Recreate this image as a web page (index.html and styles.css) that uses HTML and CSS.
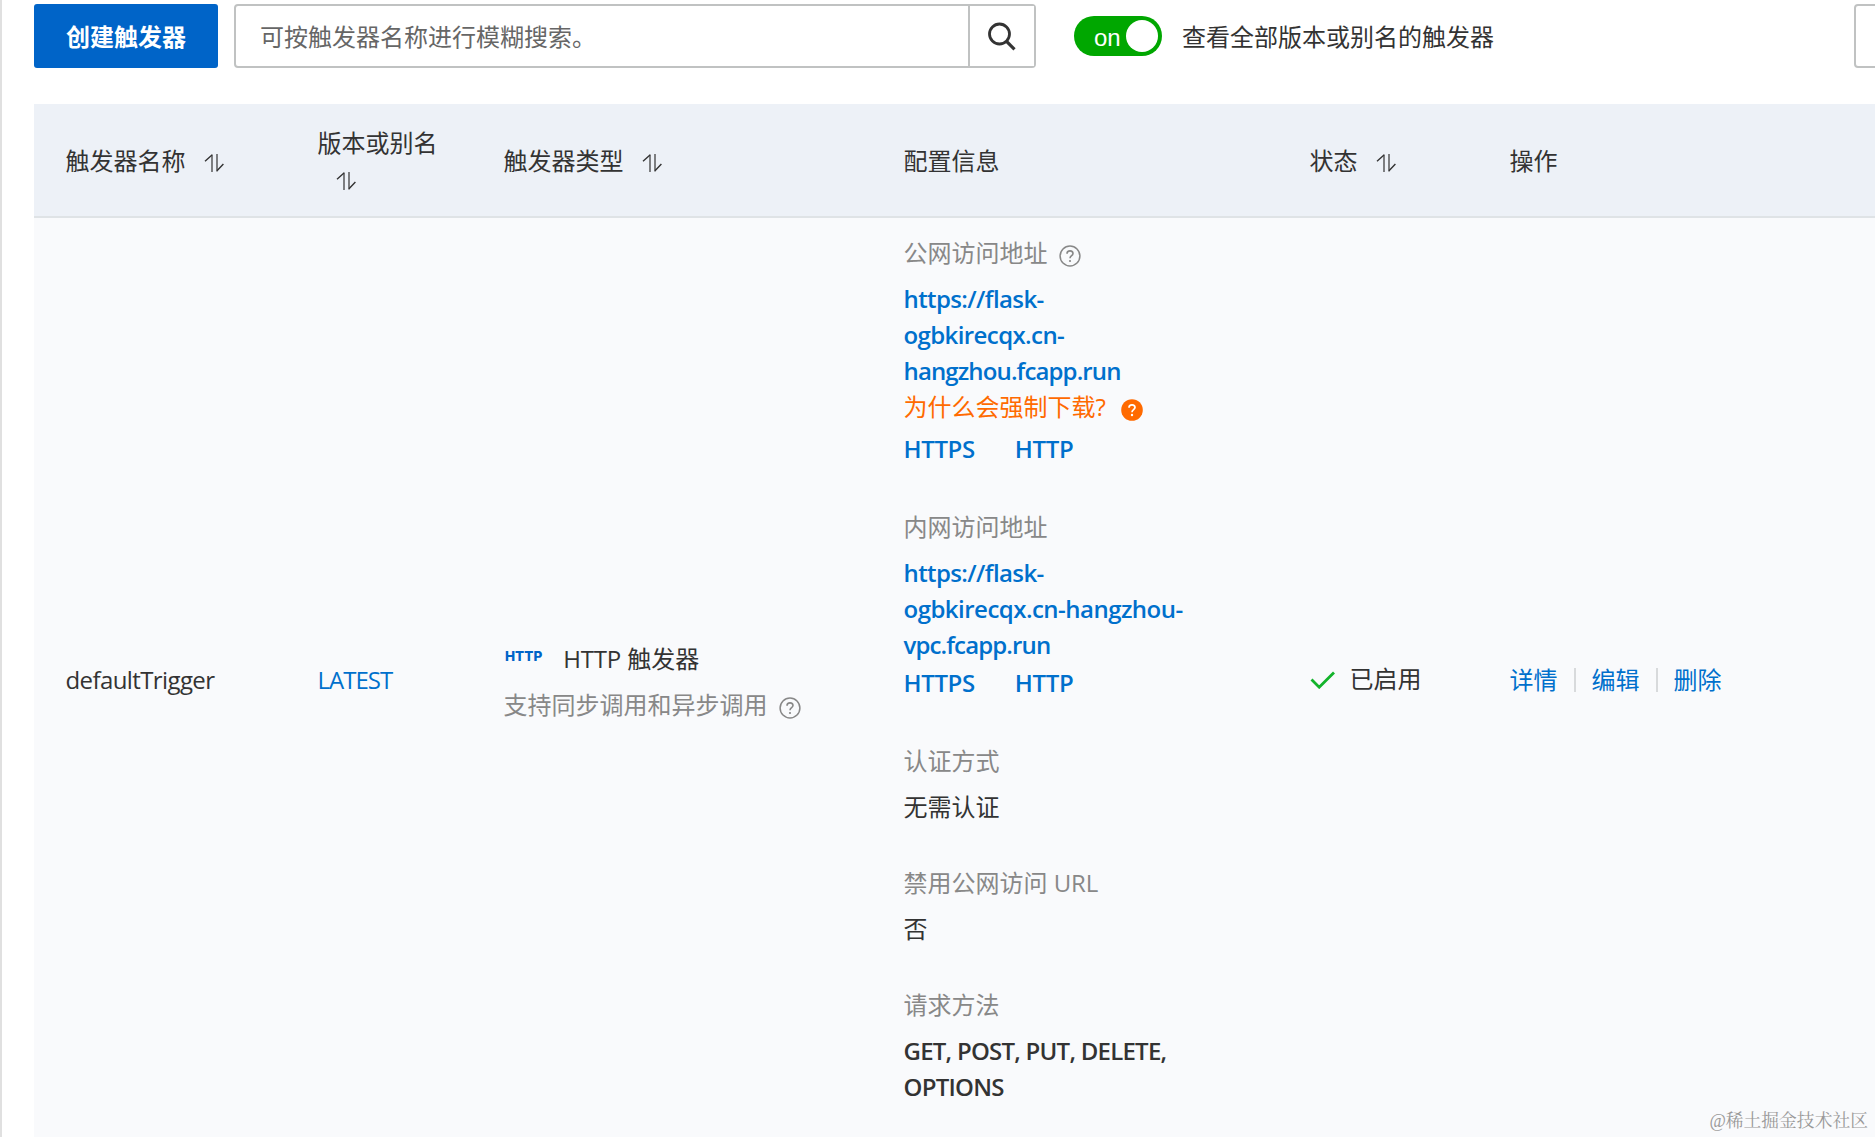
FILE: index.html
```html
<!DOCTYPE html>
<html lang="zh-CN">
<head>
<meta charset="utf-8">
<title>触发器管理</title>
<link rel="stylesheet" href="styles.css">
</head>
<body>
<svg class="defs" aria-hidden="true">
  <symbol id="sort" viewBox="0 0 20 20"><path d="M8 1.5V19M13 1V18.5" fill="none" stroke="currentColor" stroke-width="1.2"/><path d="M1 8.2 8 2M13 17.8 19.4 11" fill="none" stroke="currentColor" stroke-width="1.4"/></symbol>
  <symbol id="help" viewBox="0 0 22 22"><circle cx="11" cy="11" r="9.9" fill="none" stroke="currentColor" stroke-width="1.5"/><path d="M8 8.8C8 6.9 9.3 5.9 11 5.9S14 7 14 8.6C14 10.6 11 10.8 11 13.2" fill="none" stroke="currentColor" stroke-width="1.6"/><circle cx="11" cy="16" r="1.1" fill="currentColor"/></symbol>
</svg>
<main class="page">
  <div class="toolbar">
    <button class="create">创建触发器</button>
    <div class="search">
      <span class="search-hint">可按触发器名称进行模糊搜索。</span>
      <button class="search-btn" aria-label="搜索"><svg width="30" height="30" viewBox="0 0 30 30"><circle cx="12.5" cy="13" r="10" fill="none" stroke="#333" stroke-width="2.8"/><path d="M19.3 20.2 27.5 28.4" stroke="#333" stroke-width="3.2"/></svg></button>
    </div>
    <div class="switch"><span>on</span><i class="knob"></i></div>
    <span class="switch-label">查看全部版本或别名的触发器</span>
    <button class="refresh" aria-label="刷新"></button>
  </div>
  <div class="table">
    <div class="row head">
      <div class="cell">触发器名称<svg class="sort"><use href="#sort"/></svg></div>
      <div class="cell stacked"><span>版本或别名</span><svg class="sort"><use href="#sort"/></svg></div>
      <div class="cell">触发器类型<svg class="sort"><use href="#sort"/></svg></div>
      <div class="cell">配置信息</div>
      <div class="cell">状态<svg class="sort"><use href="#sort"/></svg></div>
      <div class="cell">操作</div>
    </div>
    <div class="row body">
      <div class="cell name">defaultTrigger</div>
      <div class="cell version"><a class="latest">LATEST</a></div>
      <div class="cell type">
        <div class="type-name"><b class="badge">HTTP</b><span><span class="latin">HTTP</span> 触发器</span></div>
        <div class="type-note">支持同步调用和异步调用<svg class="help"><use href="#help"/></svg></div>
      </div>
      <div class="cell config">
        <section class="item public">
          <h4>公网访问地址<svg class="help"><use href="#help"/></svg></h4>
          <a class="url">https://flask-<br>ogbkirecqx.cn-<br><span class="tight">hangzhou.fcapp.run</span></a>
          <div class="warn">为什么会强制下载?<svg class="help-fill" viewBox="0 0 22 22"><circle cx="11" cy="11" r="10.8" fill="#ff6a00"/><path d="M8 8.8C8 6.9 9.3 5.9 11 5.9S14 7 14 8.6C14 10.6 11 10.8 11 13.2" fill="none" stroke="#fff" stroke-width="1.7"/><circle cx="11" cy="16" r="1.2" fill="#fff"/></svg></div>
          <div class="schemes"><a>HTTPS</a><a>HTTP</a></div>
        </section>
        <section class="item private">
          <h4>内网访问地址</h4>
          <a class="url">https://flask-<br><span class="loose">ogbkirecqx.cn-hangzhou-</span><br><span class="tight">vpc.fcapp.run</span></a>
          <div class="schemes"><a>HTTPS</a><a>HTTP</a></div>
        </section>
        <section class="item"><h4>认证方式</h4><p>无需认证</p></section>
        <section class="item"><h4>禁用公网访问 <span class="latin">URL</span></h4><p>否</p></section>
        <section class="item"><h4>请求方法</h4><p class="methods">GET, POST, PUT, DELETE,<br>OPTIONS</p></section>
      </div>
      <div class="cell status"><svg width="26" height="20" viewBox="0 0 26 20"><path d="M1.5 10.5 9.2 18.2 24 3.4" fill="none" stroke="#13b32b" stroke-width="2.8"/></svg><span>已启用</span></div>
      <div class="cell ops"><a>详情</a><a>编辑</a><a>删除</a></div>
    </div>
  </div>
  <div class="watermark">@稀土掘金技术社区</div>
</main>
</body>
</html>
```
FILE: styles.css
```css
* { box-sizing: border-box; margin: 0; }
body { background: #fff; color: #333; font: 24px/36px "Open Sans", "Noto Sans CJK SC", sans-serif; }
.defs { position: absolute; width: 0; height: 0; }
.page { position: relative; height: 1137px; overflow: hidden; border-left: 2px solid #e0e0e0; padding: 4px 0 0 32px; }
button { font: inherit; padding: 0; background: #fff; }

.toolbar { display: flex; height: 64px; white-space: nowrap; }
.toolbar > * { flex: none; }
.create { width: 184px; border: 0; border-radius: 3px; background: #0064c8; color: #fff; font-weight: 700; padding-top: 2px; }
.search { display: flex; width: 802px; margin-left: 16px; border: 2px solid #c0c2c2; border-radius: 4px; }
.search-hint { flex: 1; padding-left: 24px; line-height: 62px; color: #666; }
.search-btn { width: 66px; border: 0; border-left: 2px solid #c0c2c2; display: flex; align-items: center; justify-content: center; padding-bottom: 1px; }
.switch { display: flex; align-items: center; justify-content: space-between; width: 88px; height: 40px; margin: 12px 0 0 38px; padding: 0 4px 0 20px; border-radius: 20px; background: #00a700; color: #fff; }
.switch span { font-family: "Liberation Sans", sans-serif; padding-top: 3px; }
.knob { width: 32px; height: 32px; border-radius: 50%; background: #fff; }
.switch-label { width: 312px; margin-left: 20px; line-height: 66px; }
.refresh { width: 64px; margin-left: 360px; border: 2px solid #c0c2c2; border-radius: 4px; }

.table { margin-top: 36px; }
.row { display: grid; grid-template-columns: 252px 186px 400px 406px 200px 1fr; align-items: center; }
.cell { padding-left: 31.5px; white-space: nowrap; }
.head { height: 114px; padding-top: 2px; background: #edf1f7; border-bottom: 2px solid #dfe3e6; }
.body { height: 926px; background: #f9fafc; }
.sort { width: 20px; height: 20px; margin-left: 18px; vertical-align: -3px; }
.stacked { display: flex; flex-direction: column; }
.stacked .sort { margin: 10px 0 6px 18px; }

a { color: #0070cc; }
.latin { letter-spacing: -0.2px; }
.latest { letter-spacing: -1px; }
.name { letter-spacing: -0.6px; }
.name, .version, .ops { padding-bottom: 3px; }
.type-name { display: flex; gap: 21px; margin-bottom: 10px; }
.badge { font: 800 13.5px/30px Inter, sans-serif; color: #0064c8; margin-left: 1.5px; }
.type-note, h4 { color: #888; font-weight: 400; }
.help { width: 22px; height: 22px; margin-left: 11px; vertical-align: -5px; }
.config { align-self: start; padding-top: 17px; }
.item { margin-bottom: 40px; }
.item h4 { margin-bottom: 10px; font-size: 24px; height: 36px; }
.public { margin-bottom: 42px; }
.private { margin-bottom: 42px; }
.url { display: block; font-weight: 600; letter-spacing: -0.6px; }
.tight { letter-spacing: -0.87px; }
.loose { letter-spacing: -0.52px; }
.warn { height: 36px; color: #ff6a00; }
.help-fill { width: 22px; height: 22px; margin-left: 15px; vertical-align: -5px; }
.schemes { display: flex; gap: 40px; margin-top: 2px; height: 36px; font-weight: 600; letter-spacing: -0.35px; }
.public .schemes { margin-top: 6px; }
.methods { font-weight: 600; letter-spacing: -0.75px; }
.status { display: flex; align-items: center; gap: 14px; height: 42px; padding-bottom: 6px; }
.ops { display: flex; }
.ops a + a { margin-left: 16px; padding-left: 18px; background: linear-gradient(#d8dadc, #d8dadc) 0 6px / 2px 24px no-repeat; }
.watermark { position: absolute; right: 7px; bottom: 3px; font: 17.8px/26px "Liberation Serif", "Noto Serif CJK SC", "Noto Sans CJK SC", serif; color: #999; }
```
